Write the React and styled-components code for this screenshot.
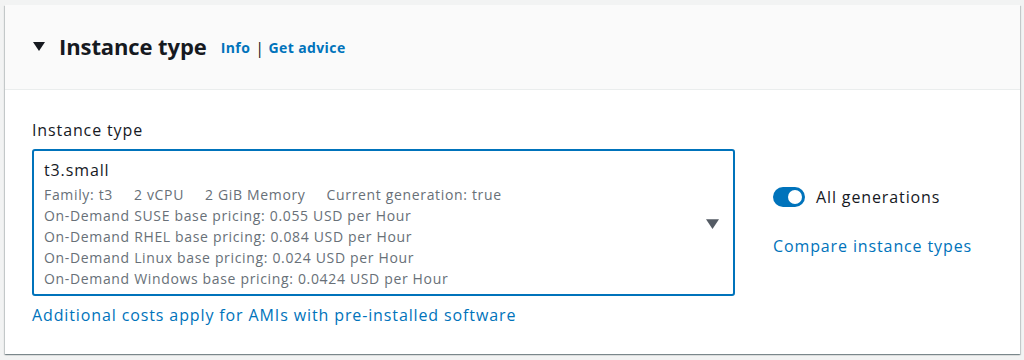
import React from "react";
import styled, { createGlobalStyle } from "styled-components";

const Global = createGlobalStyle`
  html, body { margin: 0; padding: 0; background: #f2f3f3; }
  body { font-family: "Open Sans", "Noto Sans", Arial, sans-serif; color: #16191f; letter-spacing: 0.055em; }
  * { box-sizing: border-box; }
`;

const Page = styled.div`
  width: 1024px;
  height: 360px;
  padding: 5px 4px 0 5px;
  background: #f2f3f3;
`;

const Card = styled.section`
  background: #ffffff;
  box-shadow: 0 1px 1px 0 rgba(0, 28, 36, 0.3), 1px 1px 1px 0 rgba(0, 28, 36, 0.15),
    -1px 1px 1px 0 rgba(0, 28, 36, 0.15);
  height: 349px;
  display: flex;
  flex-direction: column;
`;

const Header = styled.header`
  height: 85px;
  background: #fafafa;
  border-bottom: 1px solid #eaeded;
  display: flex;
  align-items: center;
  padding-left: 28px;
  padding-bottom: 2px;
`;

const Caret = styled.svg`
  width: ${(p) => p.$w}px;
  height: ${(p) => p.$h}px;
  flex: none;
  fill: ${(p) => p.$color};
`;

const Title = styled.h2`
  margin: 0 0 0 14px;
  font-size: 22px;
  font-weight: 700;
  line-height: 30px;
  color: #16191f;
  letter-spacing: -0.1px;
`;

const HeaderLinks = styled.div`
  margin-left: 14px;
  display: flex;
  align-items: center;
  font-size: 14px;
  font-weight: 700;
  line-height: 20px;
  padding-top: 3px;
  letter-spacing: 0.4px;
`;

const Link = styled.a`
  color: #0073bb;
  text-decoration: none;
  font-size: ${(p) => p.$size || 16}px;
  font-weight: ${(p) => p.$weight || 400};
  cursor: pointer;
`;

const Sep = styled.span`
  margin: 0 4px 0 5px;
  color: #16191f;
  font-weight: 400;
  font-size: 16px;
`;

const Body = styled.div`
  padding: 29px 0 0 27px;
  display: flex;
  flex-direction: column;
`;

const Label = styled.label`
  font-size: 16px;
  line-height: 22px;
  color: #16191f;
  margin-bottom: 8px;
`;

const Row = styled.div`
  display: flex;
  align-items: flex-start;
`;

const LeftCol = styled.div`
  display: flex;
  flex-direction: column;
  width: 703px;
`;

const Select = styled.div`
  border: 2px solid #0073bb;
  border-radius: 3px;
  padding: 7px 14px 5px 10px;
  display: flex;
  align-items: center;
  height: 147px;
`;

const SelectText = styled.div`
  flex: 1;
  display: flex;
  flex-direction: column;
`;

const Value = styled.div`
  font-size: 16px;
  line-height: 22px;
  color: #16191f;
  margin-bottom: 3px;
`;

const Detail = styled.div`
  font-size: 14px;
  line-height: 21px;
  color: #687078;
  display: flex;
  gap: 21px;
  white-space: nowrap;
  letter-spacing: 0.66px;
`;

const BelowLink = styled.div`
  margin-top: 8px;
  line-height: 22px;
`;

const RightCol = styled.div`
  margin-left: 38px;
  padding-top: 37px;
  display: flex;
  flex-direction: column;
  gap: 27px;
`;

const ToggleRow = styled.div`
  display: flex;
  align-items: center;
  gap: 11px;
  font-size: 16px;
  line-height: 22px;
  color: #16191f;
`;

const Toggle = styled.span`
  width: 32px;
  height: 20px;
  border-radius: 10px;
  background: #0073bb;
  display: flex;
  align-items: center;
  justify-content: flex-end;
  padding-right: 3px;
  flex: none;
`;

const Knob = styled.span`
  width: 14px;
  height: 14px;
  border-radius: 50%;
  background: #ffffff;
`;

const LinkLine = styled.div`
  line-height: 22px;
`;

const TriangleDown = ({ w, h, color }) => (
  <Caret $w={w} $h={h} $color={color} viewBox="0 0 12 9">
    <polygon points="0,0 12,0 6,9" />
  </Caret>
);

export default function App() {
  return (
    <>
      <Global />
      <Page>
        <Card>
          <Header>
            <TriangleDown w={12} h={9} color="#16191f" />
            <Title>Instance type</Title>
            <HeaderLinks>
              <Link $size={14} $weight={700}>Info</Link>
              <Sep>|</Sep>
              <Link $size={14} $weight={700}>Get advice</Link>
            </HeaderLinks>
          </Header>
          <Body>
            <Label>Instance type</Label>
            <Row>
              <LeftCol>
                <Select>
                  <SelectText>
                    <Value>t3.small</Value>
                    <Detail>
                      <span>Family: t3</span>
                      <span>2 vCPU</span>
                      <span>2 GiB Memory</span>
                      <span>Current generation: true</span>
                    </Detail>
                    <Detail>On-Demand SUSE base pricing: 0.055 USD per Hour</Detail>
                    <Detail>On-Demand RHEL base pricing: 0.084 USD per Hour</Detail>
                    <Detail>On-Demand Linux base pricing: 0.024 USD per Hour</Detail>
                    <Detail>On-Demand Windows base pricing: 0.0424 USD per Hour</Detail>
                  </SelectText>
                  <TriangleDown w={13} h={10} color="#545b64" />
                </Select>
                <BelowLink>
                  <Link>Additional costs apply for AMIs with pre-installed software</Link>
                </BelowLink>
              </LeftCol>
              <RightCol>
                <ToggleRow>
                  <Toggle>
                    <Knob />
                  </Toggle>
                  All generations
                </ToggleRow>
                <LinkLine>
                  <Link>Compare instance types</Link>
                </LinkLine>
              </RightCol>
            </Row>
          </Body>
        </Card>
      </Page>
    </>
  );
}
